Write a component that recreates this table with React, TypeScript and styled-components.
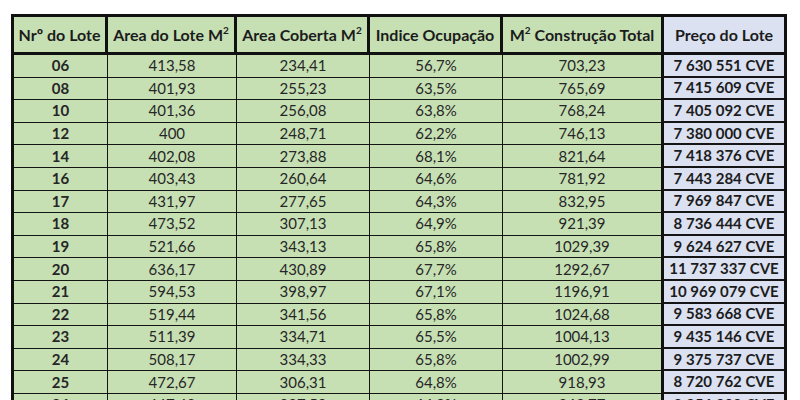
import React from "react";
import styled, { createGlobalStyle } from "styled-components";

const GlobalStyle = createGlobalStyle`
  html, body { margin: 0; padding: 0; background: #ffffff; }
  body { font-family: Lato, "Open Sans", sans-serif; color: #1e1e1e; }
`;

const Page = styled.div`
  padding: 14px 0 0 11px;
  height: 400px;
  overflow: hidden;
  box-sizing: border-box;
`;

const Table = styled.table`
  border-collapse: separate;
  border-spacing: 0;
  table-layout: fixed;
  width: 776px;
  border-top: 3px solid #111;
  border-left: 3px solid #111;
  box-sizing: border-box;
`;

const HeadCell = styled.th<{ $blue?: boolean; $edge?: boolean }>`
  height: 38px;
  padding: 0;
  box-sizing: border-box;
  background: ${(p) => (p.$blue ? "#dbe1f1" : "#c6e0b4")};
  border-right: ${(p) => (p.$edge ? "0" : "3px")} solid #111;
  border-bottom: 3px solid #111;
  font-size: 16px;
  font-weight: 700;
  text-align: center;
  white-space: nowrap;
  color: #1c1c1c;
  sup {
    font-size: 10px;
    vertical-align: 7px;
    line-height: 0;
  }
`;

const PriceHead = styled(HeadCell)`
  border-left: 3px solid #111;
`;

const Cell = styled.td<{ $bold?: boolean; $edge?: boolean }>`
  height: 22.6px;
  padding: 0;
  box-sizing: border-box;
  background: #c6e0b4;
  border-right: ${(p) => (p.$edge ? "0" : "1px")} solid #151515;
  border-bottom: 1px solid #151515;
  font-size: 15px;
  font-weight: ${(p) => (p.$bold ? 700 : 400)};
  text-align: center;
  white-space: nowrap;
  color: #262626;
  line-height: 1;
`;

const PriceCell = styled.td`
  height: 22.6px;
  padding: 0;
  box-sizing: border-box;
  background: #dbe1f1;
  border-left: 3px solid #111;
  border-right: 3px solid #111;
  border-bottom: 2px solid #151515;
  font-size: 15px;
  font-weight: 700;
  text-align: center;
  white-space: nowrap;
  color: #1c1c1c;
  line-height: 1;
`;

type Row = [string, string, string, string, string, string];

const rows: Row[] = [
  ["06", "413,58", "234,41", "56,7%", "703,23", "7 630 551 CVE"],
  ["08", "401,93", "255,23", "63,5%", "765,69", "7 415 609 CVE"],
  ["10", "401,36", "256,08", "63,8%", "768,24", "7 405 092 CVE"],
  ["12", "400", "248,71", "62,2%", "746,13", "7 380 000 CVE"],
  ["14", "402,08", "273,88", "68,1%", "821,64", "7 418 376 CVE"],
  ["16", "403,43", "260,64", "64,6%", "781,92", "7 443 284 CVE"],
  ["17", "431,97", "277,65", "64,3%", "832,95", "7 969 847 CVE"],
  ["18", "473,52", "307,13", "64,9%", "921,39", "8 736 444 CVE"],
  ["19", "521,66", "343,13", "65,8%", "1029,39", "9 624 627 CVE"],
  ["20", "636,17", "430,89", "67,7%", "1292,67", "11 737 337 CVE"],
  ["21", "594,53", "398,97", "67,1%", "1196,91", "10 969 079 CVE"],
  ["22", "519,44", "341,56", "65,8%", "1024,68", "9 583 668 CVE"],
  ["23", "511,39", "334,71", "65,5%", "1004,13", "9 435 146 CVE"],
  ["24", "508,17", "334,33", "65,8%", "1002,99", "9 375 737 CVE"],
  ["25", "472,67", "306,31", "64,8%", "918,93", "8 720 762 CVE"],
  ["26", "447,48", "287,50", "64,3%", "862,77", "8 256 300 CVE"],
];

export default function App() {
  return (
    <>
      <GlobalStyle />
      <Page>
        <Table>
          <colgroup>
            <col style={{ width: 94 }} />
            <col style={{ width: 129 }} />
            <col style={{ width: 133 }} />
            <col style={{ width: 133 }} />
            <col style={{ width: 158 }} />
            <col style={{ width: 126 }} />
          </colgroup>
          <thead>
            <tr>
              <HeadCell>Nrº do Lote</HeadCell>
              <HeadCell>
                Area do Lote M<sup>2</sup>
              </HeadCell>
              <HeadCell>
                Area Coberta M<sup>2</sup>
              </HeadCell>
              <HeadCell>Indice Ocupação</HeadCell>
              <HeadCell $edge>
                M<sup>2</sup> Construção Total
              </HeadCell>
              <PriceHead $blue>Preço do Lote</PriceHead>
            </tr>
          </thead>
          <tbody>
            {rows.map((r) => (
              <tr key={r[0]}>
                <Cell $bold>{r[0]}</Cell>
                <Cell>{r[1]}</Cell>
                <Cell>{r[2]}</Cell>
                <Cell>{r[3]}</Cell>
                <Cell $edge>{r[4]}</Cell>
                <PriceCell>{r[5]}</PriceCell>
              </tr>
            ))}
          </tbody>
        </Table>
      </Page>
    </>
  );
}
